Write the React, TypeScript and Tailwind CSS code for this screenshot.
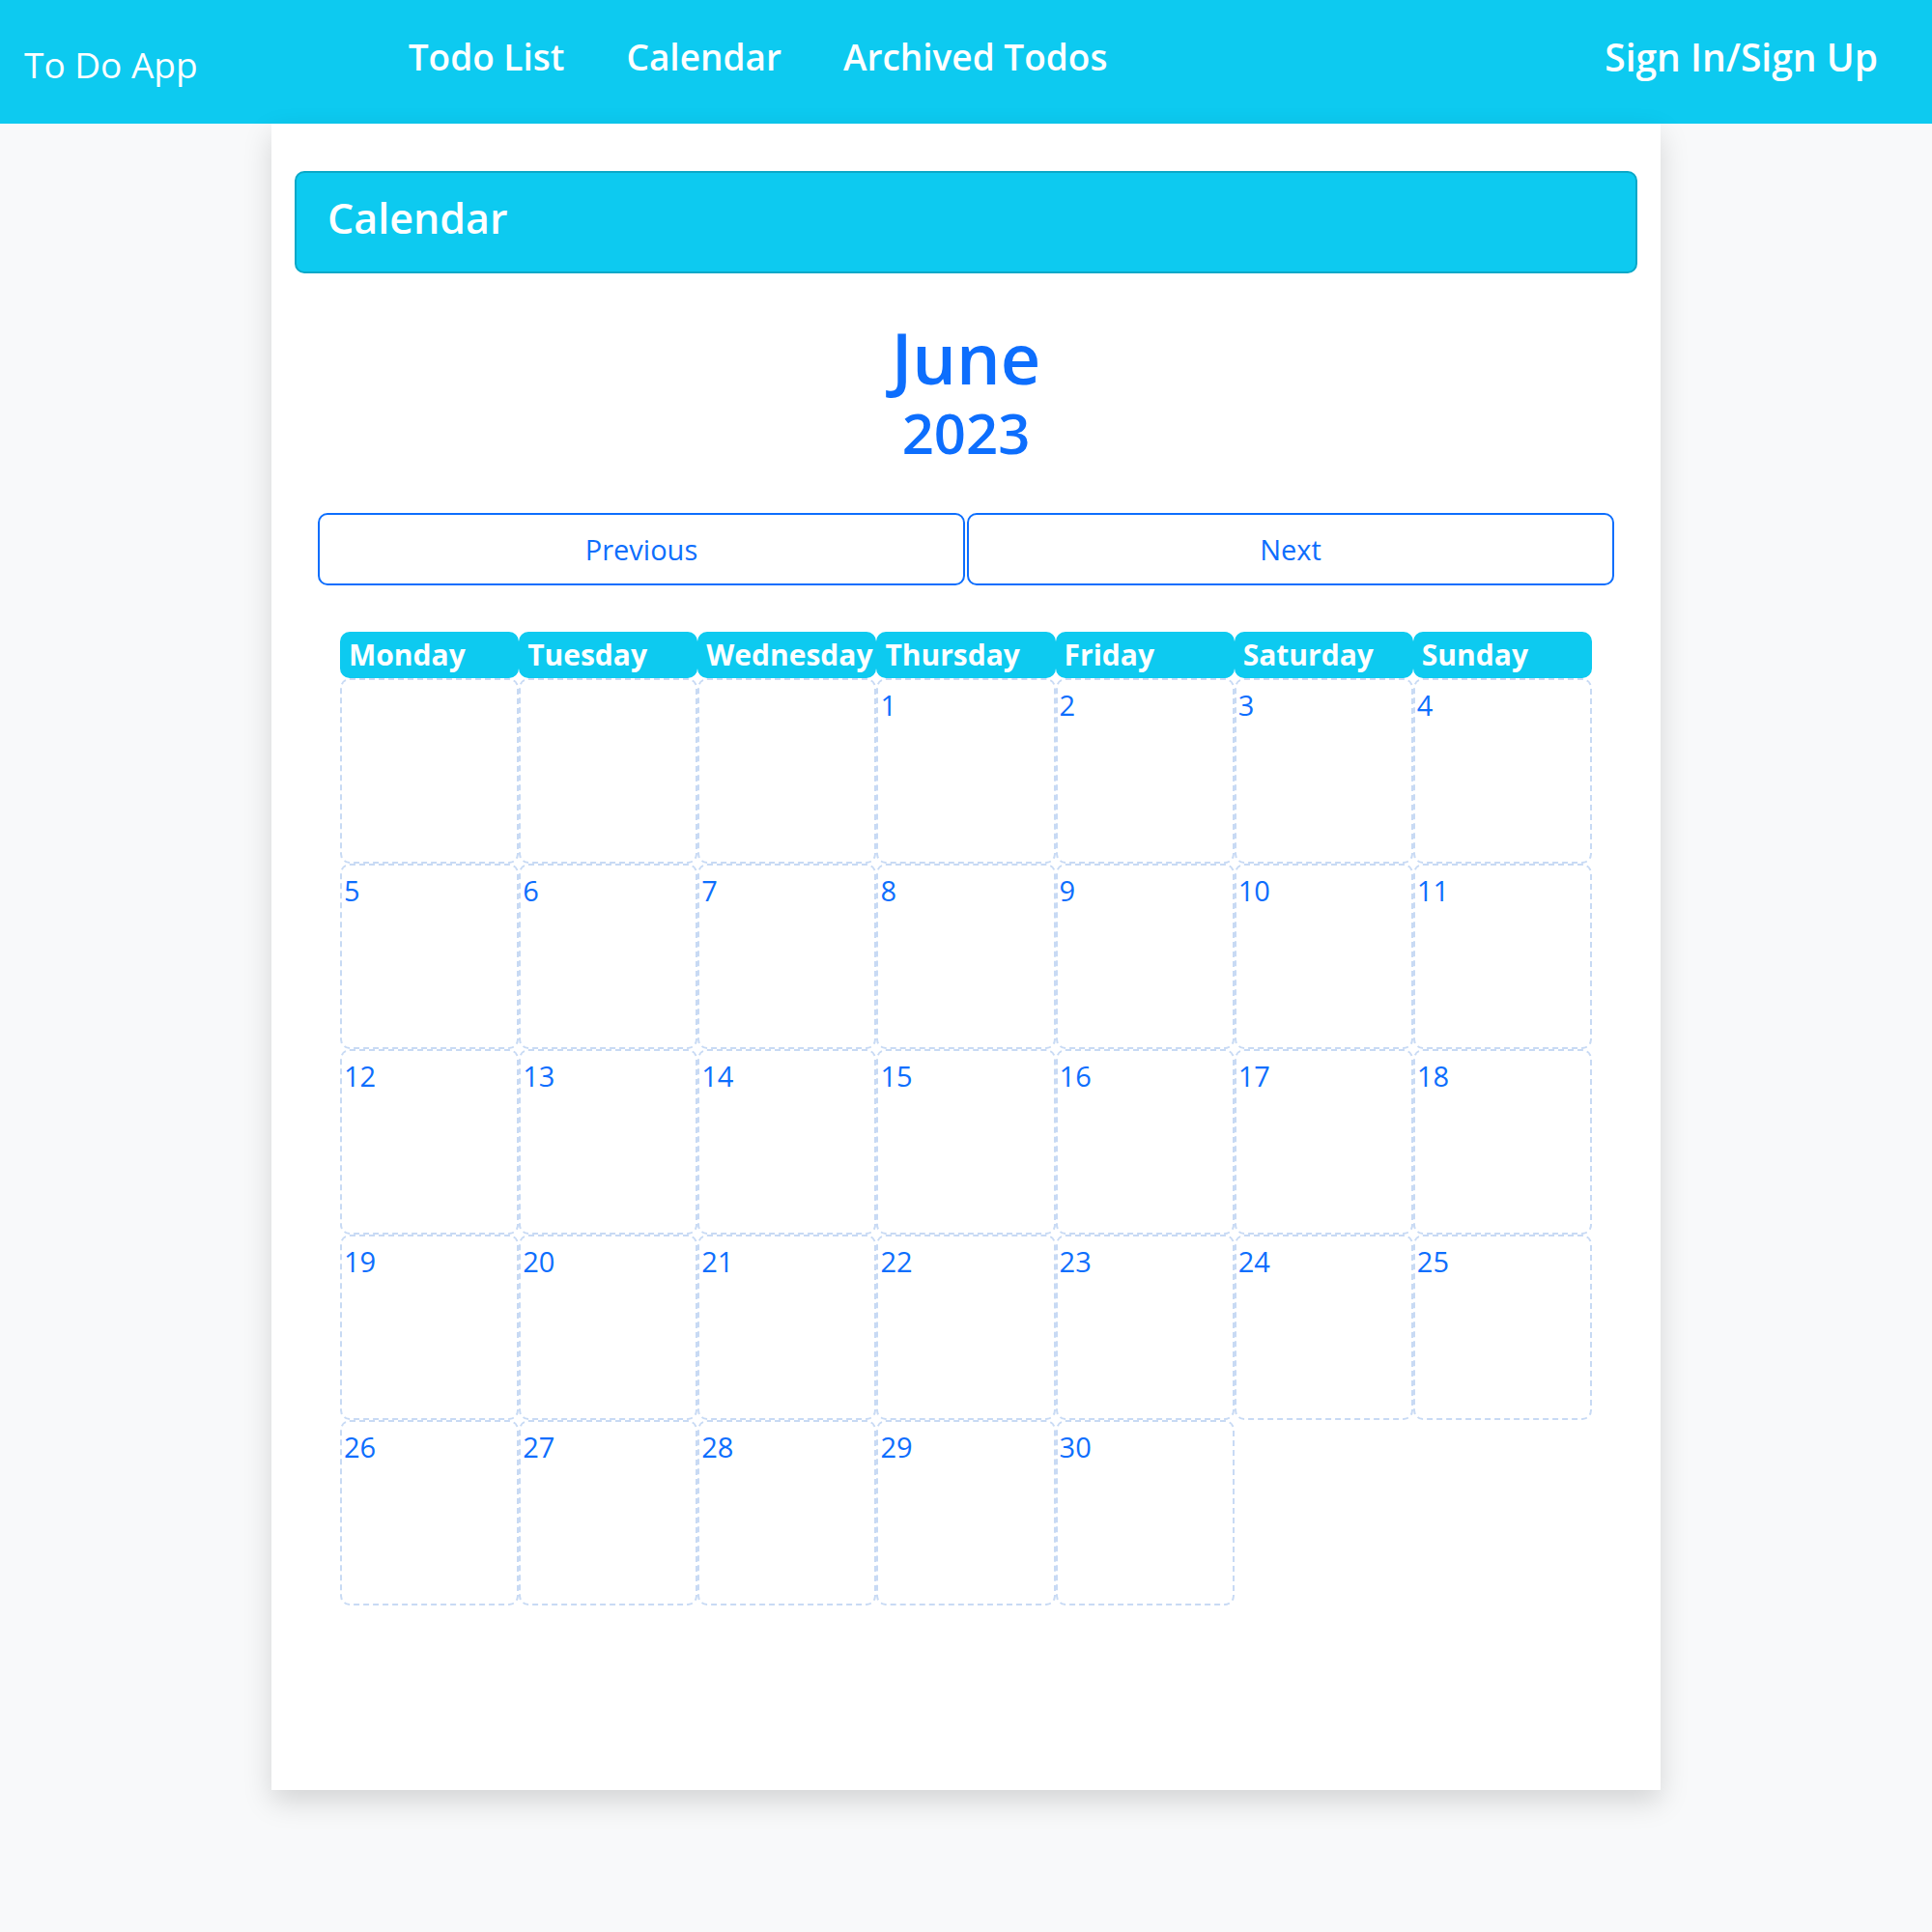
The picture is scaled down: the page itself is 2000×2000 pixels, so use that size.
const weekdays = ["Monday", "Tuesday", "Wednesday", "Thursday", "Friday", "Saturday", "Sunday"];

// June 2023 starts on a Thursday, so three blank cells before the 1st
const cells: (number | null)[] = [null, null, null, ...Array.from({ length: 30 }, (_, i) => i + 1)];

export default function App() {
  return (
    <div className="min-h-[2000px] bg-[#f8f9fa] font-['Open_Sans',sans-serif]">
      <nav className="flex h-[128px] items-center bg-[#0dcaf0] px-[25px] text-white">
        <a href="#" className="mt-[6px] text-[37px] font-normal">
          To Do App
        </a>
        <div className="mb-[10px] ml-[218px] flex gap-[64px] text-[37px] font-semibold">
          <a href="#">Todo List</a>
          <a href="#">Calendar</a>
          <a href="#">Archived Todos</a>
        </div>
        <a href="#" className="mb-[10px] ml-auto mr-[31px] text-[39px] font-semibold">
          Sign In/Sign Up
        </a>
      </nav>

      <main className="mx-auto h-[1725px] w-[1438px] bg-white px-[24px] pt-[49px] shadow-[0_12px_28px_rgba(0,0,0,0.15)]">
        <div className="flex h-[106px] items-center rounded-[10px] border-2 border-[#0aa8c8] bg-[#0dcaf0] px-[32px] pb-[8px]">
          <h2 className="text-[43px] font-semibold text-white">Calendar</h2>
        </div>

        <div className="mt-[47px] flex flex-col items-center text-[#0d6efd]">
          <h3 className="text-[72px] leading-[80px] font-semibold">June</h3>
          <h4 className="mt-[3px] text-[58px] leading-[70px] font-semibold">2023</h4>
        </div>

        <div className="mx-[24px] mt-[48px] flex gap-[2px]">
          <button className="h-[75px] flex-1 rounded-[10px] border-2 border-[#0d6efd] text-[29px] text-[#0d6efd]">
            Previous
          </button>
          <button className="h-[75px] flex-1 rounded-[10px] border-2 border-[#0d6efd] text-[29px] text-[#0d6efd]">
            Next
          </button>
        </div>

        <div className="mx-[47px] mt-[48px] grid grid-cols-7">
          {weekdays.map((d) => (
            <div
              key={d}
              className="flex h-[48px] items-center overflow-visible whitespace-nowrap rounded-[10px] bg-[#0dcaf0] pl-[9px] pb-[2px] text-[30px] font-bold text-white"
            >
              {d}
            </div>
          ))}
          {cells.map((n, i) => (
            <div
              key={i}
              className="h-[192px] rounded-[10px] border-2 border-dashed border-[#c8daf4] pl-[2px] pt-[4px] text-[29px] leading-[44px] text-[#0d6efd]"
            >
              {n}
            </div>
          ))}
        </div>
      </main>
    </div>
  );
}
